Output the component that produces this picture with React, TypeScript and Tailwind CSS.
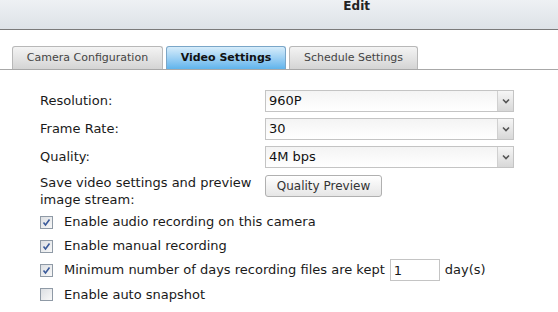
import { useState } from 'react'

const font = { fontFamily: '"DejaVu Sans", Verdana, sans-serif' }

function Select({ value }: { value: string }) {
  return (
    <div className="flex h-[22px] w-[249px] border border-[#c4c4c4] bg-white">
      <div className="flex flex-1 items-center bg-gradient-to-b from-[#f4f4f4] to-white pl-[3px] text-[13px] text-[#111]">
        {value}
      </div>
      <div className="flex w-[16px] items-center justify-center border-l border-[#d0d0d0] bg-gradient-to-b from-[#f6f6f6] to-[#d8d8d8]">
        <svg width="8" height="6" viewBox="0 0 8 6">
          <path d="M1 1.5 L4 4.5 L7 1.5" fill="none" stroke="#555" strokeWidth="1.6" />
        </svg>
      </div>
    </div>
  )
}

function Check({ on }: { on: boolean }) {
  return (
    <div className="flex h-[13px] w-[13px] shrink-0 items-center justify-center border border-[#8f9aa6] bg-gradient-to-br from-[#dcdfe3] to-[#f8f8f8]">
      {on && (
        <svg width="9" height="9" viewBox="0 0 9 9">
          <path d="M1.5 4.5 L3.5 7 L7.5 1.5" fill="none" stroke="#3a5a9a" strokeWidth="1.6" />
        </svg>
      )}
    </div>
  )
}

export default function App() {
  const [tab] = useState(1)
  const tabs = ['Camera Configuration', 'Video Settings', 'Schedule Settings']

  return (
    <div className="h-[312px] w-[558px] overflow-hidden bg-white text-[#1a1a1a]" style={font}>
      {/* Header */}
      <div className="flex h-[30px] items-start justify-end border-b border-[#7a7a7a] bg-gradient-to-b from-[#eef1f4] to-[#dde2e7] pr-[188px]">
        <span className="text-[12px] leading-[13px] font-bold text-[#222]">Edit</span>
      </div>

      {/* Tabs */}
      <div className="mt-[16px] flex gap-[3px] border-b border-[#a8a8a8] pl-[12px]">
        {tabs.map((t, i) => (
          <div
            key={t}
            className={
              i === tab
                ? 'flex h-[23px] w-[120px] items-center justify-center rounded-t-[3px] border border-b-0 border-[#7aa6c8] bg-gradient-to-b from-[#d6ecfa] to-[#5fb4ec] text-[11px] font-bold text-[#111]'
                : 'flex h-[23px] items-center justify-center rounded-t-[3px] border border-b-0 border-[#b8b8b8] bg-gradient-to-b from-[#f4f4f4] to-[#d4d4d4] text-[11px] text-[#444]'
            }
            style={i === 0 ? { width: 151 } : i === 2 ? { width: 129 } : undefined}
          >
            {t}
          </div>
        ))}
      </div>

      {/* Form */}
      <div className="pl-[40px] pt-[20px] text-[13px]">
        <div className="flex flex-col gap-[6px]">
          <div className="flex items-center">
            <div className="w-[225px]">Resolution:</div>
            <Select value="960P" />
          </div>
          <div className="flex items-center">
            <div className="w-[225px]">Frame Rate:</div>
            <Select value="30" />
          </div>
          <div className="flex items-center">
            <div className="w-[225px]">Quality:</div>
            <Select value="4M bps" />
          </div>
          <div className="flex items-start">
            <div className="w-[225px] leading-[17px]">
              Save video settings and preview image stream:
            </div>
            <button className="mt-[1px] h-[22px] w-[117px] rounded-[3px] border border-[#b0b0b0] bg-gradient-to-b from-white to-[#e6e6e6] text-[12px] text-[#333]">
              Quality Preview
            </button>
          </div>
        </div>

        <div className="mt-[2px] flex flex-col">
          <label className="flex h-[24px] items-center gap-[11px]">
            <Check on />
            <span>Enable audio recording on this camera</span>
          </label>
          <label className="flex h-[24px] items-center gap-[11px]">
            <Check on />
            <span>Enable manual recording</span>
          </label>
          <label className="flex h-[24px] items-center gap-[11px]">
            <Check on />
            <span>Minimum number of days recording files are kept</span>
            <input
              defaultValue="1"
              className="-ml-[6px] h-[22px] w-[50px] border border-[#c4c4c4] px-[3px] text-[13px] outline-none"
              style={font}
            />
            <span className="-ml-[6px]">day(s)</span>
          </label>
          <label className="flex h-[25px] items-center gap-[11px]">
            <Check on={false} />
            <span>Enable auto snapshot</span>
          </label>
        </div>
      </div>
    </div>
  )
}
